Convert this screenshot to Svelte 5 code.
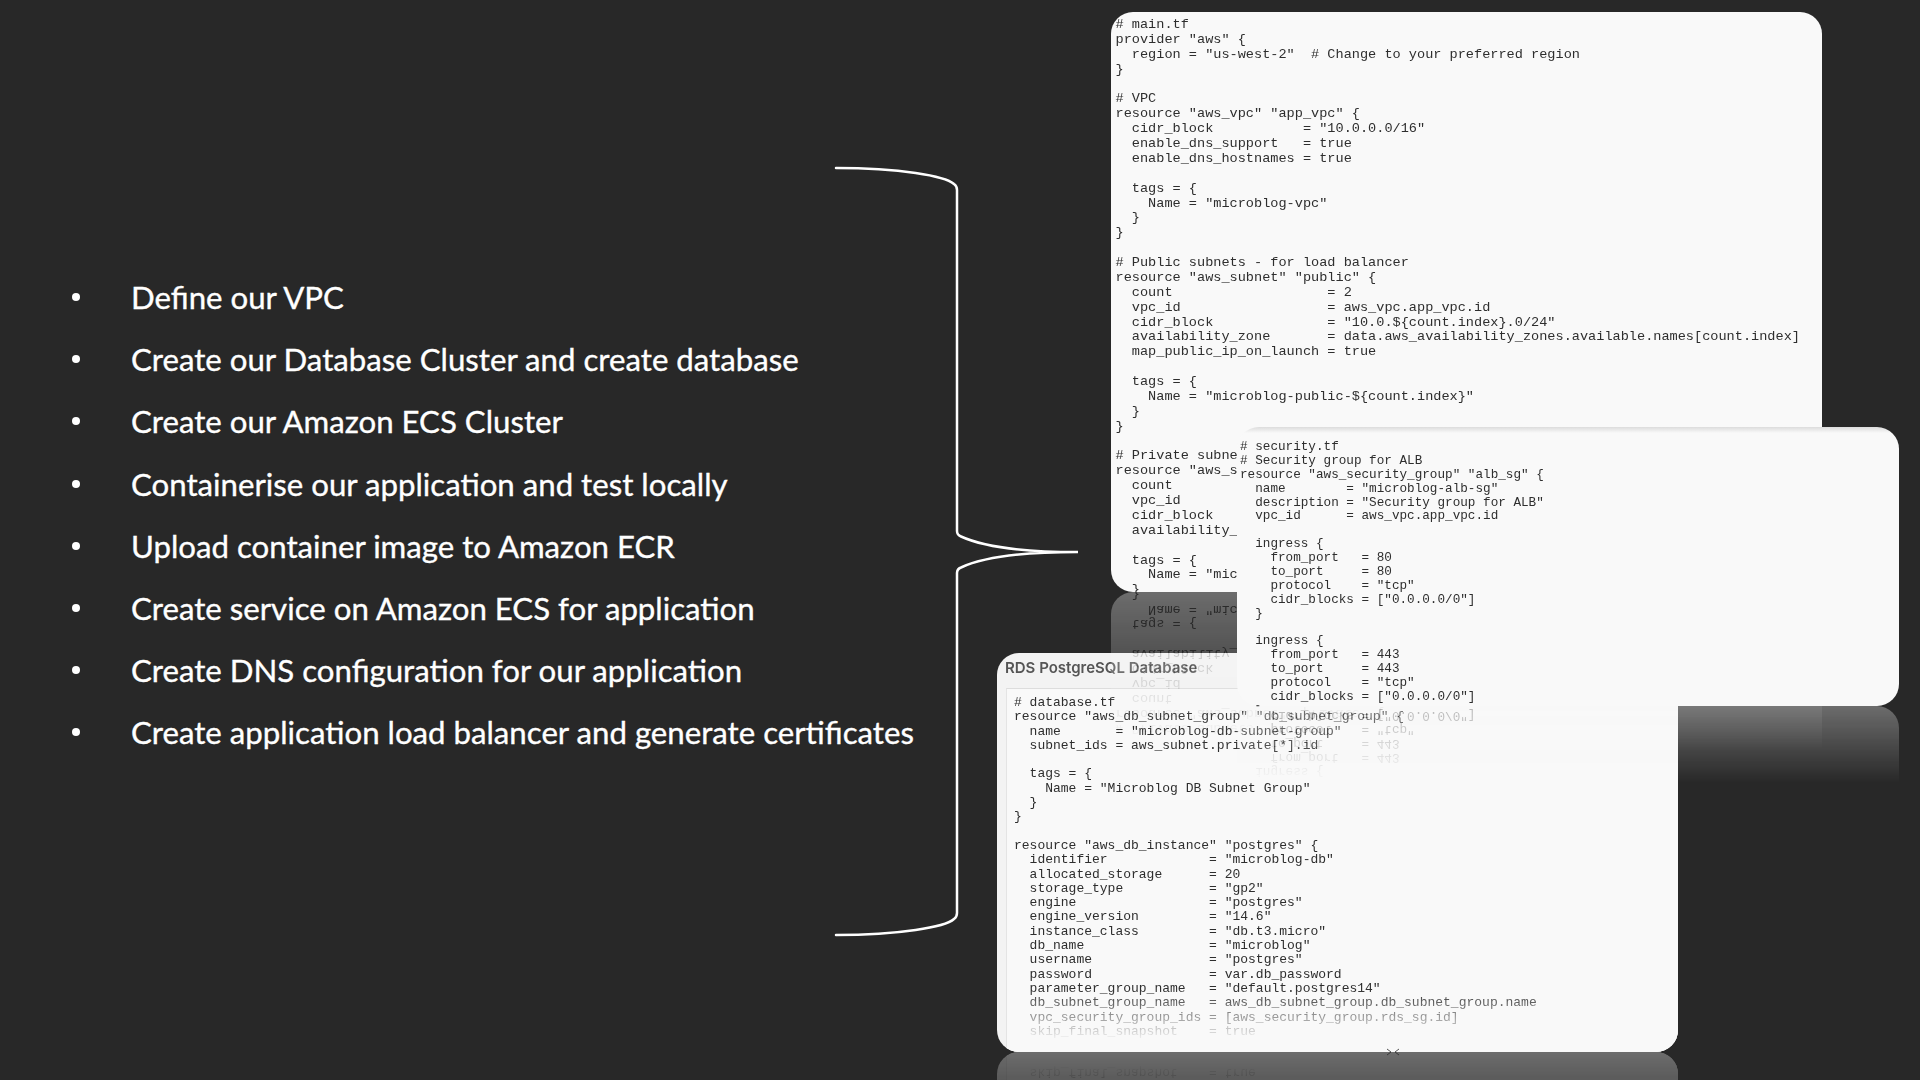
<script>
  const steps = [
    'Define our VPC',
    'Create our Database Cluster and create database',
    'Create our Amazon ECS Cluster',
    'Containerise our application and test locally',
    'Upload container image to Amazon ECR',
    'Create service on Amazon ECS for application',
    'Create DNS configuration for our application',
    'Create application load balancer and generate certificates'
  ];

  const mainTf = `# main.tf
provider "aws" {
  region = "us-west-2"  # Change to your preferred region
}

# VPC
resource "aws_vpc" "app_vpc" {
  cidr_block           = "10.0.0.0/16"
  enable_dns_support   = true
  enable_dns_hostnames = true

  tags = {
    Name = "microblog-vpc"
  }
}

# Public subnets - for load balancer
resource "aws_subnet" "public" {
  count                   = 2
  vpc_id                  = aws_vpc.app_vpc.id
  cidr_block              = "10.0.\${count.index}.0/24"
  availability_zone       = data.aws_availability_zones.available.names[count.index]
  map_public_ip_on_launch = true

  tags = {
    Name = "microblog-public-\${count.index}"
  }
}

# Private subnets
resource "aws_subnet" "private" {
  count
  vpc_id
  cidr_block
  availability_

  tags = {
    Name = "microblog-private"
  }`;

  const securityTf = `# security.tf
# Security group for ALB
resource "aws_security_group" "alb_sg" {
  name        = "microblog-alb-sg"
  description = "Security group for ALB"
  vpc_id      = aws_vpc.app_vpc.id

  ingress {
    from_port   = 80
    to_port     = 80
    protocol    = "tcp"
    cidr_blocks = ["0.0.0.0/0"]
  }

  ingress {
    from_port   = 443
    to_port     = 443
    protocol    = "tcp"
    cidr_blocks = ["0.0.0.0/0"]
  }`;

  const databaseTf = `# database.tf
resource "aws_db_subnet_group" "db_subnet_group" {
  name       = "microblog-db-subnet-group"
  subnet_ids = aws_subnet.private[*].id

  tags = {
    Name = "Microblog DB Subnet Group"
  }
}

resource "aws_db_instance" "postgres" {
  identifier             = "microblog-db"
  allocated_storage      = 20
  storage_type           = "gp2"
  engine                 = "postgres"
  engine_version         = "14.6"
  instance_class         = "db.t3.micro"
  db_name                = "microblog"
  username               = "postgres"
  password               = var.db_password
  parameter_group_name   = "default.postgres14"
  db_subnet_group_name   = aws_db_subnet_group.db_subnet_group.name
  vpc_security_group_ids = [aws_security_group.rds_sg.id]
  skip_final_snapshot    = true`;
</script>

<main class="slide">
  <ul class="steps">
    {#each steps as step}
      <li>{step}</li>
    {/each}
  </ul>

  <svg class="brace" viewBox="0 0 260 780" width="260" height="780" aria-hidden="true">
    <path d="M2 4C66 4 111 12 120 20Q123 22 123 26V367Q123 371 127 372.500C150 383 186 388 244 388C186 388 150 393 127 403.500Q123 405 123 409V749Q123 753 120 755C111 763 66 771 2 771" />
  </svg>

  <section class="card db">
    <h3>RDS PostgreSQL Database</h3>
    <div class="db-body">
      <pre>{databaseTf}</pre>
      <div class="fade"></div>
    </div>
    <svg class="handle" viewBox="0 0 14 8" width="14" height="8" aria-hidden="true">
      <path d="M1 1L5 4L1 7M13 1L9 4L13 7" />
    </svg>
  </section>

  <section class="card main-tf"><pre>{mainTf}</pre></section>
  <section class="card security"><pre>{securityTf}</pre></section>
</main>

<style>
  :global(body) {
    background: #282828;
  }

  .slide {
    position: relative;
    width: 1920px;
    height: 1080px;
    overflow: hidden;
    background: #282828;
  }

  .steps {
    margin: 0;
    padding: 266px 0 0 131px;
    list-style: none;
    font-family: Lato, sans-serif;
    font-size: 31.200px;
    line-height: 62.200px;
    color: #fff;
    -webkit-text-stroke: 0.35px #fff;
  }

  .steps li {
    position: relative;
    white-space: nowrap;
  }

  .steps li::before {
    content: '';
    position: absolute;
    left: -59px;
    top: 27px;
    width: 8px;
    height: 8px;
    border-radius: 50%;
    background: #fff;
  }

  .brace {
    position: absolute;
    left: 834px;
    top: 164px;
  }

  .brace path {
    fill: none;
    stroke: #fff;
    stroke-width: 2.500;
    stroke-linecap: round;
  }

  .card {
    position: absolute;
    overflow: hidden;
    background: #f9f9f9;
    border-radius: 22px;
    -webkit-box-reflect: below 0 linear-gradient(transparent 72.400%, rgba(255, 255, 255, 0.33));
  }

  pre {
    margin: 0;
    font-family: 'Liberation Mono', monospace;
    color: #2e2e2e;
  }

  .main-tf {
    left: 1111px;
    top: 12px;
    width: 711px;
    height: 580px;
  }

  .main-tf pre {
    padding: 6px 0 0 4.500px;
    font-size: 13.590px;
    line-height: 14.870px;
  }

  .security {
    left: 1237px;
    top: 427px;
    width: 662px;
    height: 279px;
    background: linear-gradient(#dcdcdc, #f9f9f9 6px);
  }

  .security pre {
    padding: 13px 0 0 3px;
    font-size: 12.660px;
    line-height: 13.870px;
  }

  .db {
    left: 997px;
    top: 653px;
    width: 681px;
    height: 399px;
    background: #f3f3f3;
  }

  .db h3 {
    margin: 0;
    height: 35px;
    padding-left: 8px;
    font-family: Inter, sans-serif;
    font-size: 15px;
    font-weight: 600;
    line-height: 30px;
    color: #555;
  }

  .db-body {
    position: relative;
    height: 364px;
    margin-left: 9px;
    background: #f9f9f9;
    border-top: 1px solid #ddd;
    border-left: 1px solid #e4e4e4;
  }

  .db-body pre {
    padding: 7px 0 0 7px;
    font-size: 13px;
    line-height: 14.300px;
  }

  .fade {
    position: absolute;
    left: 0;
    right: 0;
    bottom: 0;
    height: 64px;
    background: linear-gradient(rgba(249, 249, 249, 0), #f9f9f9 82%);
  }

  .handle {
    position: absolute;
    left: 389px;
    bottom: -4px;
  }

  .handle path {
    fill: none;
    stroke: #555;
    stroke-width: 1;
  }
</style>
